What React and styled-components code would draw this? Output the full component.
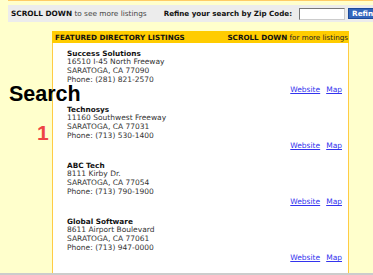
import React from "react";
import styled, { createGlobalStyle } from "styled-components";

const GlobalStyle = createGlobalStyle`
  html, body { margin: 0; padding: 0; background: #ffffcc; }
`;

const Page = styled.div`
  width: 373px;
  height: 275px;
  overflow: hidden;
  background: #ffffcc;
  display: flex;
  flex-direction: column;
  font-family: "DejaVu Sans", Verdana, sans-serif;
  color: #222;
`;

const TopRule = styled.div`
  margin-left: 8px;
  height: 1px;
  background: #ffcc66;
  flex-shrink: 0;
`;

const Toolbar = styled.div`
  margin: 4px 0 0 8px;
  height: 17px;
  flex-shrink: 0;
  background: #ececec;
  display: flex;
  align-items: center;
  padding-left: 3px;
  font-size: 7.35px;
  white-space: nowrap;
  overflow: hidden;
`;

const Strong = styled.b`
  font-weight: bold;
  color: #111;
`;

const Muted = styled.span`
  color: #444;
`;

const RefineLabel = styled.span`
  margin-left: 17px;
  font-weight: bold;
  font-size: 7.15px;
  color: #111;
`;

const ZipInput = styled.input`
  margin-left: 7px;
  width: 46px;
  height: 12px;
  flex-shrink: 0;
  box-sizing: border-box;
  border: 1px solid #777;
  border-right-color: #ccc;
  border-bottom-color: #ccc;
  background: #fff;
  padding: 0;
`;

const RefineButton = styled.button`
  margin-left: 3px;
  height: 11px;
  flex-shrink: 0;
  padding: 0 3px;
  border: 1px solid #1c4a9a;
  background: #3366bb;
  color: #fff;
  font-family: "DejaVu Sans", Verdana, sans-serif;
  font-weight: bold;
  font-size: 7.3px;
  line-height: 9px;
`;

const Main = styled.div`
  flex: 1;
  display: flex;
  margin-top: 9px;
  min-height: 0;
`;

const Side = styled.div`
  width: 52px;
  flex-shrink: 0;
  display: flex;
  flex-direction: column;
`;

const SearchTitle = styled.div`
  position: relative;
  z-index: 1;
  margin: 53px 0 0 9px;
  font-family: "Liberation Sans", Arial, sans-serif;
  font-weight: bold;
  font-size: 21.5px;
  line-height: 21px;
  color: #000;
  white-space: nowrap;
`;

const StepNumber = styled.div`
  margin: 17px 0 0 37px;
  font-family: "Liberation Sans", Arial, sans-serif;
  font-weight: bold;
  font-size: 21px;
  line-height: 21px;
  color: #ee4444;
`;

const Panel = styled.div`
  width: 297px;
  flex-shrink: 0;
  display: flex;
  flex-direction: column;
`;

const PanelHeader = styled.div`
  height: 12px;
  flex-shrink: 0;
  background: #ffcc00;
  display: flex;
  align-items: center;
  justify-content: space-between;
  padding: 0 1px 0 3px;
  font-size: 7.2px;
  white-space: nowrap;
`;

const PanelBody = styled.div`
  flex: 1;
  background: #fff;
  border-left: 1px solid #ffcc44;
  border-right: 1px solid #ffcc44;
  padding: 6.5px 6px 0 14px;
`;

const Listing = styled.div`
  font-size: 7.5px;
  line-height: 8.67px;
  color: #333;
  margin-bottom: 10.7px;
`;

const Name = styled.div`
  font-weight: bold;
  color: #111;
  font-size: 7.3px;
`;

const Links = styled.div`
  display: flex;
  justify-content: flex-end;
  gap: 6px;
  margin-top: 2px;
`;

const Link = styled.a`
  color: #3333ee;
  text-decoration: underline;
`;

const BottomLine = styled.div`
  height: 2px;
  flex-shrink: 0;
  background: #cccccc;
`;

const listings = [
  { name: "Success Solutions", addr: "16510 I-45 North Freeway", city: "SARATOGA, CA 77090", phone: "Phone: (281) 821-2570" },
  { name: "Technosys", addr: "11160 Southwest Freeway", city: "SARATOGA, CA 77031", phone: "Phone: (713) 530-1400" },
  { name: "ABC Tech", addr: "8111 Kirby Dr.", city: "SARATOGA, CA 77054", phone: "Phone: (713) 790-1900" },
  { name: "Global Software", addr: "8611 Airport Boulevard", city: "SARATOGA, CA 77061", phone: "Phone: (713) 947-0000" },
];

export default function App() {
  return (
    <>
      <GlobalStyle />
      <Page>
        <TopRule />
        <Toolbar>
          <Strong>SCROLL DOWN</Strong>
          <Muted>&nbsp;to see more listings</Muted>
          <RefineLabel>Refine your search by Zip Code:</RefineLabel>
          <ZipInput type="text" />
          <RefineButton>Refine</RefineButton>
        </Toolbar>
        <Main>
          <Side>
            <SearchTitle>Search</SearchTitle>
            <StepNumber>1</StepNumber>
          </Side>
          <Panel>
            <PanelHeader>
              <Strong>FEATURED DIRECTORY LISTINGS</Strong>
              <span>
                <Strong>SCROLL DOWN</Strong> for more listings
              </span>
            </PanelHeader>
            <PanelBody>
              {listings.map((l) => (
                <Listing key={l.name}>
                  <Name>{l.name}</Name>
                  <div>{l.addr}</div>
                  <div>{l.city}</div>
                  <div>{l.phone}</div>
                  <Links>
                    <Link href="#">Website</Link>
                    <Link href="#">Map</Link>
                  </Links>
                </Listing>
              ))}
            </PanelBody>
          </Panel>
        </Main>
        <BottomLine />
      </Page>
    </>
  );
}
